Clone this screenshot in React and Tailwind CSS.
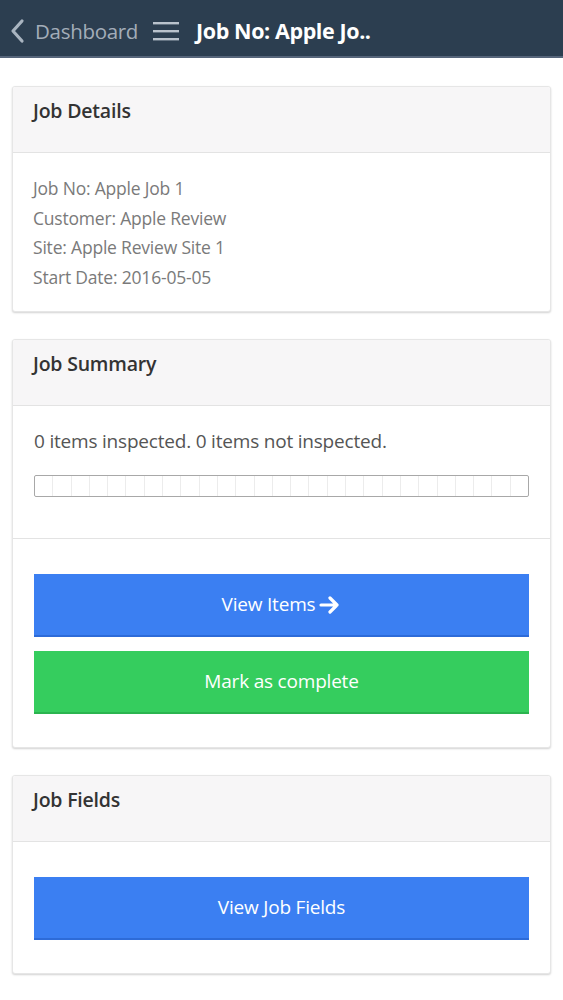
import React from "react";

const font = { fontFamily: '"Open Sans", "Noto Sans", sans-serif' };

function Card({ title, children }) {
  return (
    <div className="mx-3 bg-white border border-[#e6e6e6] rounded-[3px] shadow-[0_1px_2px_rgba(0,0,0,0.18)] overflow-hidden">
      <div className="h-[66px] bg-[#f7f6f7] border-b border-[#e3e3e3] px-[20px] pt-[10px]">
        <div className="text-[19.5px] font-semibold text-[#333] leading-[28px] tracking-[-0.2px]">{title}</div>
      </div>
      {children}
    </div>
  );
}

export default function App() {
  const segs = Array.from({ length: 27 });
  return (
    <div className="min-h-[1000px] bg-white" style={font}>
      <div className="h-[58px] bg-[#2c3e50] border-b-2 border-[#56657a] flex items-center pl-[9px] pt-[6px]">
        <svg width="18" height="26" viewBox="0 0 18 26" className="mr-[8px]">
          <path d="M13 3 L4 13 L13 23" stroke="#a9b4c0" strokeWidth="3.2" fill="none" strokeLinecap="round" strokeLinejoin="round" />
        </svg>
        <span className="text-[20.5px] text-[#a3adb9] tracking-[-0.3px]">Dashboard</span>
        <svg width="28" height="22" viewBox="0 0 28 22" className="ml-[14px] mr-[16px]">
          <rect x="1" y="2" width="26" height="2.4" fill="#b9c2cc" />
          <rect x="1" y="10" width="26" height="2.4" fill="#b9c2cc" />
          <rect x="1" y="18" width="26" height="2.4" fill="#b9c2cc" />
        </svg>
        <span className="text-[21.5px] font-bold text-white tracking-[-0.4px]">Job No: Apple Jo..</span>
      </div>

      <div className="pt-[28px] flex flex-col gap-[27px] pb-6">
        <Card title="Job Details">
          <div className="px-[20px] pt-[21px] pb-[19px] text-[17.5px] text-[#7a7a7a] leading-[29.5px] tracking-[-0.2px]">
            <div>Job No: Apple Job 1</div>
            <div>Customer: Apple Review</div>
            <div>Site: Apple Review Site 1</div>
            <div>Start Date: 2016-05-05</div>
          </div>
        </Card>

        <Card title="Job Summary">
          <div className="px-[21px] pt-[21px] pb-[41px] border-b border-[#e3e3e3]">
            <div className="text-[19px] text-[#555] leading-[28px] tracking-[-0.2px]">0 items inspected. 0 items not inspected.</div>
            <div className="mt-[20px] h-[22px] border border-[#a8a8a8] rounded-[2px] flex overflow-hidden">
              {segs.map((_, i) => (
                <div key={i} className="flex-1 border-r border-[#ececec] last:border-r-0" />
              ))}
            </div>
          </div>
          <div className="px-[21px] pt-[35px] pb-[33px] flex flex-col gap-[14px]">
            <button className="h-[63px] bg-[#3b7ff2] border-b-2 border-[#2d6bd8] text-white text-[19px] flex items-center justify-center gap-[4px] tracking-[-0.2px]">
              <span>View Items</span>
              <svg width="22" height="18" viewBox="0 0 22 18">
                <path d="M2 9 H18 M11 2 L18 9 L11 16" stroke="white" strokeWidth="3.2" fill="none" strokeLinecap="round" strokeLinejoin="round" />
              </svg>
            </button>
            <button className="h-[63px] bg-[#35cd5e] border-b-2 border-[#2bb44f] text-white text-[19px] flex items-center justify-center tracking-[-0.2px]">
              Mark as complete
            </button>
          </div>
        </Card>

        <Card title="Job Fields">
          <div className="px-[21px] pt-[35px] pb-[33px]">
            <button className="w-full h-[63px] bg-[#3b7ff2] border-b-2 border-[#2d6bd8] text-white text-[19px] flex items-center justify-center tracking-[-0.2px]">
              View Job Fields
            </button>
          </div>
        </Card>
      </div>
    </div>
  );
}
